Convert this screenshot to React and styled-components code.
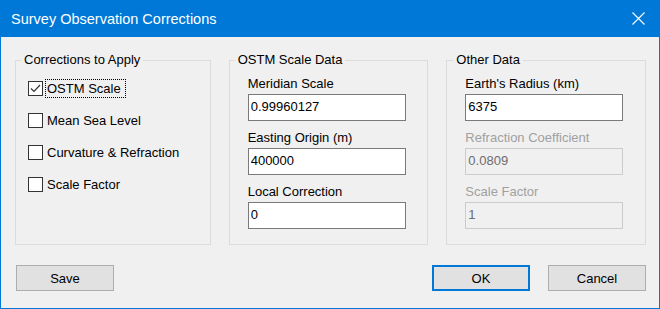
import React from "react";
import styled, { createGlobalStyle } from "styled-components";

const GlobalStyle = createGlobalStyle`
  html, body {
    margin: 0;
    padding: 0;
    background: #f0f0f0;
  }
  body {
    font-family: "Liberation Sans", Arial, sans-serif;
  }
`;

const Window = styled.div`
  width: 660px;
  height: 309px;
  box-sizing: border-box;
  border: 1px solid #0078d7;
  border-top: 0;
  background: #f0f0f0;
  display: flex;
  flex-direction: column;
`;

const TitleBar = styled.div`
  height: 37px;
  flex-shrink: 0;
  background: #0078d7;
  color: #fff;
  display: flex;
  align-items: center;
  justify-content: space-between;
  padding: 0 14px 0 10px;
  font-size: 14.5px;
`;

const CloseBtn = styled.div`
  width: 13px;
  height: 13px;
  display: flex;
`;

const Body = styled.div`
  padding: 23px 13px 0 14px;
  display: flex;
  flex-direction: column;
`;

const Groups = styled.div`
  display: flex;
  gap: 18px;
`;

const Group = styled.div`
  width: ${(p) => p.$w}px;
  height: 185px;
  box-sizing: border-box;
  border: 1px solid #dcdcdc;
  display: flex;
  flex-direction: column;
`;

const Legend = styled.span`
  align-self: flex-start;
  margin: -9px 0 0 ${(p) => p.$ml || 5}px;
  padding: 0 3px;
  background: #f0f0f0;
  font-size: 13px;
  line-height: 16px;
  color: #000;
`;

const CheckList = styled.div`
  display: flex;
  flex-direction: column;
  gap: 13px;
  margin: 11px 0 0 12px;
`;

const CheckRow = styled.div`
  display: flex;
  align-items: center;
  height: 19px;
  gap: 2px;
`;

const Box = styled.span`
  width: 15px;
  height: 15px;
  box-sizing: border-box;
  border: 1px solid #333;
  background: #fff;
  display: flex;
  align-items: center;
  justify-content: center;
`;

const CheckLabel = styled.span`
  font-size: 13px;
  line-height: 17px;
  padding: 0 4px 0 1px;
  border: 1px dotted ${(p) => (p.$focus ? "#000" : "transparent")};
  color: #000;
`;

const Fields = styled.div`
  display: flex;
  flex-direction: column;
  margin: 8px 0 0 18px;
`;

const FieldLabel = styled.div`
  font-size: 13px;
  line-height: 16px;
  color: ${(p) => (p.$disabled ? "#a0a0a0" : "#000")};
`;

const Input = styled.input`
  width: 158px;
  height: 27px;
  box-sizing: border-box;
  margin: 2px 0 9px;
  padding: 0 2px 3px;
  border: 1px solid #7a7a7a;
  background: #fff;
  font-family: "Liberation Sans", Arial, sans-serif;
  font-size: 13px;
  color: #000;
  outline: none;

  &:disabled {
    border-color: #cccccc;
    background: #f0f0f0;
    color: #6d6d6d;
  }
`;

const Footer = styled.div`
  display: flex;
  align-items: center;
  margin-top: 20px;
  padding-left: 1px;
`;

const Button = styled.button`
  width: 98px;
  height: 26px;
  box-sizing: border-box;
  margin-left: ${(p) => p.$ml || 0}px;
  border: ${(p) => (p.$primary ? "2px solid #0078d7" : "1px solid #adadad")};
  background: #e1e1e1;
  font-family: "Liberation Sans", Arial, sans-serif;
  font-size: 13px;
  color: #000;
  padding: 0;
`;

const Spacer = styled.div`
  flex: 1;
`;

function Check({ label, checked, focus }) {
  return (
    <CheckRow>
      <Box>
        {checked && (
          <svg width="11" height="9" viewBox="0 0 11 9">
            <path d="M1 4.5 L4 7.5 L10 1" fill="none" stroke="#333" strokeWidth="1.2" />
          </svg>
        )}
      </Box>
      <CheckLabel $focus={focus}>{label}</CheckLabel>
    </CheckRow>
  );
}

function Field({ label, value, disabled }) {
  return (
    <>
      <FieldLabel $disabled={disabled}>{label}</FieldLabel>
      <Input defaultValue={value} disabled={disabled} />
    </>
  );
}

export default function App() {
  return (
    <>
      <GlobalStyle />
      <Window>
        <TitleBar>
          <span>Survey Observation Corrections</span>
          <CloseBtn>
            <svg width="13" height="13" viewBox="0 0 13 13">
              <path d="M0.5 0.5 L12.5 12.5 M12.5 0.5 L0.5 12.5" stroke="#fff" strokeWidth="1.1" />
            </svg>
          </CloseBtn>
        </TitleBar>
        <Body>
          <Groups>
            <Group $w={196}>
              <Legend>Corrections to Apply</Legend>
              <CheckList>
                <Check label="OSTM Scale" checked focus />
                <Check label="Mean Sea Level" />
                <Check label="Curvature & Refraction" />
                <Check label="Scale Factor" />
              </CheckList>
            </Group>
            <Group $w={200}>
              <Legend>OSTM Scale Data</Legend>
              <Fields>
                <Field label="Meridian Scale" value="0.99960127" />
                <Field label="Easting Origin (m)" value="400000" />
                <Field label="Local Correction" value="0" />
              </Fields>
            </Group>
            <Group $w={200}>
              <Legend $ml={6}>Other Data</Legend>
              <Fields>
                <Field label="Earth's Radius (km)" value="6375" />
                <Field label="Refraction Coefficient" value="0.0809" disabled />
                <Field label="Scale Factor" value="1" disabled />
              </Fields>
            </Group>
          </Groups>
          <Footer>
            <Button>Save</Button>
            <Spacer />
            <Button $primary>OK</Button>
            <Button $ml={18}>Cancel</Button>
          </Footer>
        </Body>
      </Window>
    </>
  );
}
